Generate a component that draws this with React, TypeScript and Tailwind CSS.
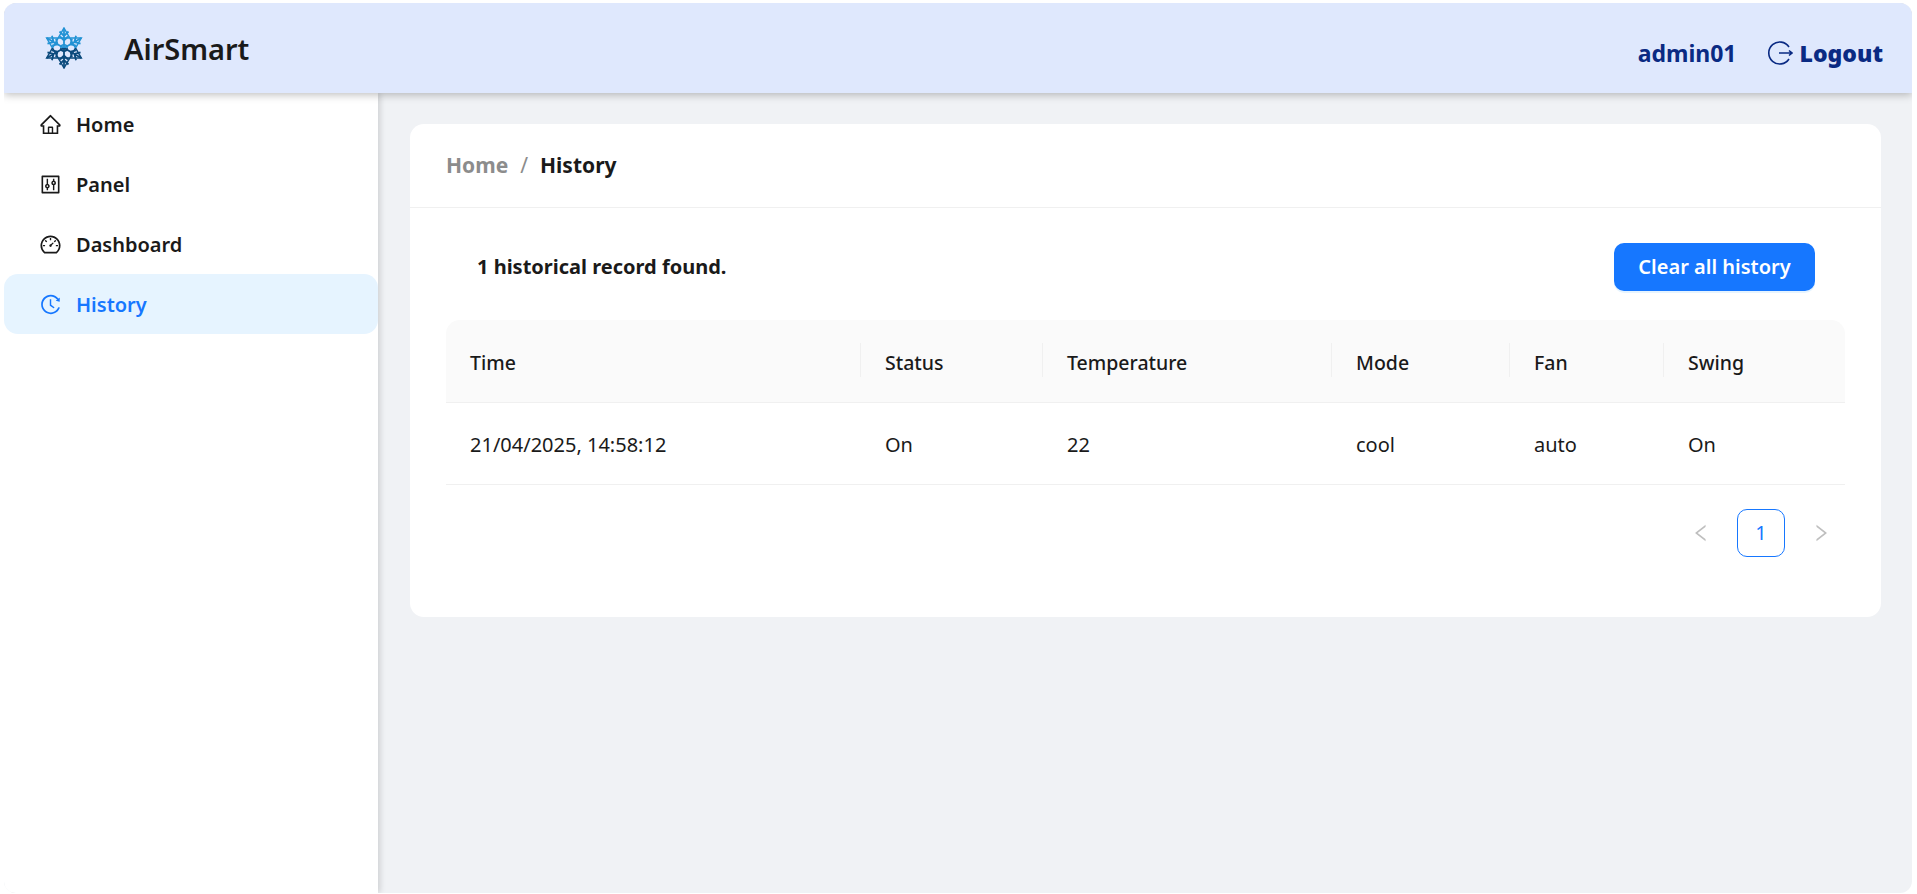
import { AiOutlineControl, AiOutlineDashboard, AiOutlineHistory, AiOutlineHome, AiOutlineLeft, AiOutlineRight } from "react-icons/ai";

const menuItems = [
  { label: "Home", icon: AiOutlineHome },
  { label: "Panel", icon: AiOutlineControl },
  { label: "Dashboard", icon: AiOutlineDashboard },
  { label: "History", icon: AiOutlineHistory, active: true },
];

const columns = [
  { title: "Time", value: "21/04/2025, 14:58:12", width: "w-[415px]" },
  { title: "Status", value: "On", width: "w-[182px]" },
  { title: "Temperature", value: "22", width: "w-[289px]" },
  { title: "Mode", value: "cool", width: "w-[178px]" },
  { title: "Fan", value: "auto", width: "w-[154px]" },
  { title: "Swing", value: "On", width: "flex-1" },
];

const FlakeShape = () => (
  <>
    <path d="M19 1L36.3 31H1.7ZM19 41L1.7 11H36.3Z" strokeWidth="1.5" />
    {[0, 60, 120, 180, 240, 300].map((angle) => (
      <path
        key={angle}
        transform={`rotate(${angle} 19 21)`}
        d="M19 21V1M14.5 4.5L19 9L23.5 4.5M15 9.5L19 13.5L23 9.5"
        strokeWidth="1.8"
      />
    ))}
    <circle cx="19" cy="21" r="3.2" strokeWidth="1.5" />
  </>
);

const Snowflake = () => (
  <svg width="38" height="42" viewBox="0 0 38 42" fill="none">
    <defs>
      <clipPath id="flakeTop"><rect x="0" y="0" width="38" height="21" /></clipPath>
      <clipPath id="flakeBottom"><rect x="0" y="21" width="38" height="21" /></clipPath>
    </defs>
    <g stroke="#2292d4" clipPath="url(#flakeTop)"><FlakeShape /></g>
    <g stroke="#0b4a7c" clipPath="url(#flakeBottom)"><FlakeShape /></g>
  </svg>
);

const LogoutIcon = () => (
  <svg width="25" height="24" viewBox="0 0 25 24" fill="none" stroke="#0a2a83" strokeWidth="1.6">
    <path d="M21 6A11 11 0 1 0 21 18" />
    <path d="M11 12H24M21 9.5L24 12L21 14.5" />
  </svg>
);

export default function App() {
  return (
    <div className="h-[894px] w-full bg-white pt-[3px] pl-[4px] pr-[5px] pb-[1px] font-['Noto_Sans',sans-serif] text-[#1a1a1a]">
      <div className="flex h-full flex-col overflow-hidden rounded-[12px] bg-[#f0f2f5]">
        <header className="z-10 flex h-[90px] shrink-0 items-center justify-between bg-[#dfe8fd] pl-[41px] pr-[29px] shadow-[0_2px_8px_rgba(0,0,0,0.25)]">
          <div className="flex items-center">
            <Snowflake />
            <span className="ml-[41px] pt-[2px] text-[29px] font-semibold">AirSmart</span>
          </div>
          <div className="flex items-center pt-[10px] text-[#0a2a83]">
            <span className="text-[23px] font-bold">admin01</span>
            <span className="ml-[31px]"><LogoutIcon /></span>
            <span className="ml-[7px] text-[23px] font-black">Logout</span>
          </div>
        </header>

        <div className="flex flex-1">
          <aside className="w-[374px] shrink-0 bg-white pt-[1px] shadow-[2px_0_6px_rgba(0,0,0,0.15)]">
            {menuItems.map((item) => (
              <div
                key={item.label}
                className={`flex h-[60px] items-center rounded-[14px] pl-[35px] text-[20px] font-semibold ${item.active ? "bg-[#e6f4ff] text-[#1677ff]" : ""}`}
              >
                <item.icon className="mr-[14px] text-[23px]" />
                <span className="pt-[2px]">{item.label}</span>
              </div>
            ))}
          </aside>

          <main className="flex-1 pl-[32px] pr-[31px] pt-[31px]">
            <div className="h-[493px] rounded-[14px] bg-white">
              <div className="flex h-[84px] items-center gap-[12px] border-b border-[#f0f0f0] pl-[36px] text-[21px] font-bold">
                <span className="text-[#8c8c8c]">Home</span>
                <span className="font-normal text-[#8c8c8c]">/</span>
                <span>History</span>
              </div>

              <div className="px-[36px]">
                <div className="flex h-[112px] items-center justify-between pl-[31px] pr-[30px] pt-[6px]">
                  <span className="text-[20px] font-bold">1 historical record found.</span>
                  <button className="h-[48px] w-[201px] rounded-[10px] bg-[#1677ff] text-[20px] font-semibold text-white shadow-[0_2px_0_rgba(5,145,255,0.1)]">
                    Clear all history
                  </button>
                </div>

                <div className="flex rounded-t-[14px] bg-[#fafafa]">
                  {columns.map((col, i) => (
                    <div key={col.title} className={`relative flex h-[83px] shrink-0 items-center border-b border-[#f0f0f0] pl-[24px] pt-[4px] text-[19.5px] font-medium ${col.width}`}>
                      {col.title}
                      {i < columns.length - 1 && <span className="absolute right-0 top-[23px] h-[34px] w-px bg-[#f0f0f0]" />}
                    </div>
                  ))}
                </div>
                <div className="flex">
                  {columns.map((col) => (
                    <div key={col.title} className={`flex h-[82px] shrink-0 items-center border-b border-[#f0f0f0] pl-[24px] pt-[2px] text-[20px] ${col.width}`}>
                      {col.value}
                    </div>
                  ))}
                </div>

                <div className="mt-[24px] flex items-center justify-end gap-[12px] text-[#bfbfbf]">
                  <span className="flex h-[48px] w-[48px] items-center justify-center"><AiOutlineLeft className="text-[22px]" /></span>
                  <span className="flex h-[48px] w-[48px] items-center justify-center rounded-[10px] border border-[#1677ff] text-[20px] text-[#1677ff]">1</span>
                  <span className="flex h-[48px] w-[48px] items-center justify-center"><AiOutlineRight className="text-[22px]" /></span>
                </div>
              </div>
            </div>
          </main>
        </div>
      </div>
    </div>
  );
}
